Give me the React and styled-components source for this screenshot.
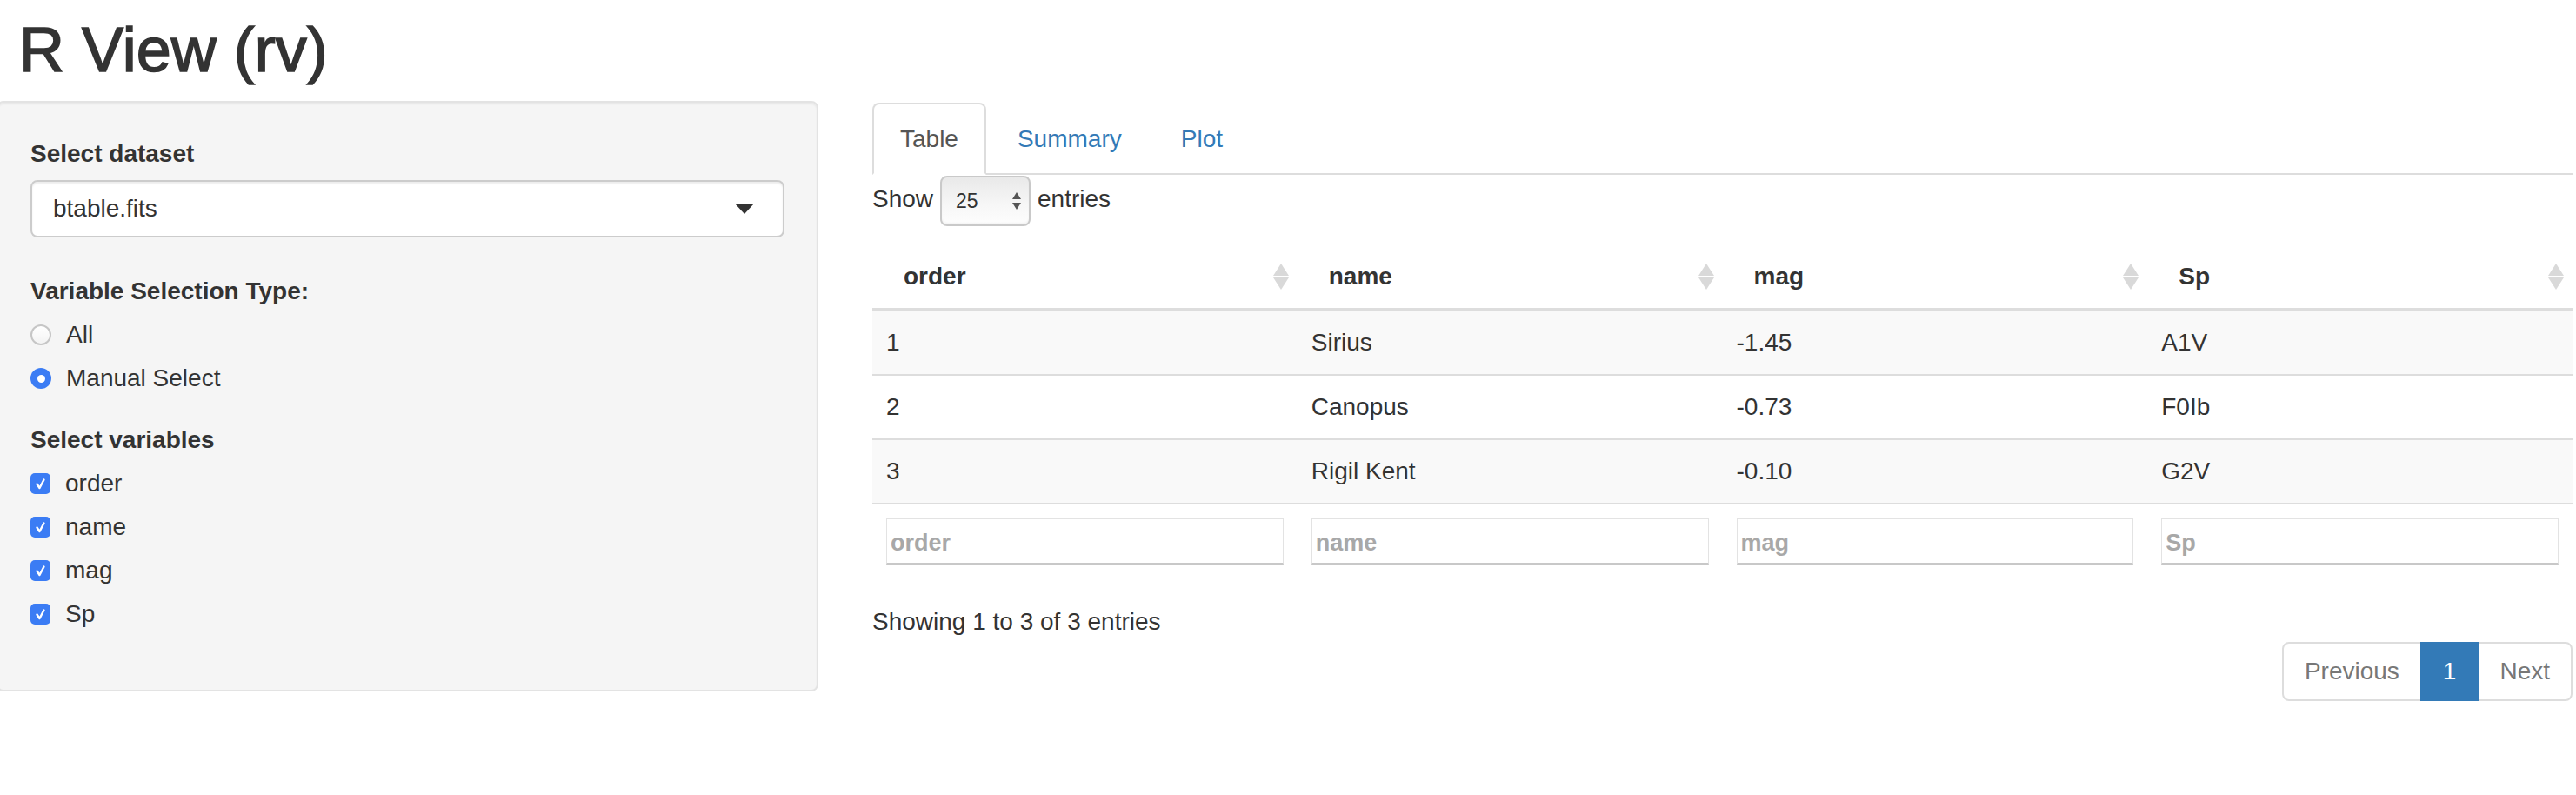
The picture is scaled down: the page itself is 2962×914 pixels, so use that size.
import React from "react";
import styled, { createGlobalStyle } from "styled-components";

const GlobalStyle = createGlobalStyle`
  html, body {
    margin: 0;
    padding: 0;
    background: #fff;
  }
  body {
    font-family: "Liberation Sans", Arial, Helvetica, sans-serif;
    font-size: 28px;
    line-height: 40px;
    color: #333;
  }
  * {
    box-sizing: border-box;
  }
`;

const columns = ["order", "name", "mag", "Sp"];
const rows = [
  ["1", "Sirius", "-1.45", "A1V"],
  ["2", "Canopus", "-0.73", "F0Ib"],
  ["3", "Rigil Kent", "-0.10", "G2V"],
];

const Page = styled.div`
  width: 100%;
`;

const Title = styled.h1`
  margin: 18px 0 19px 22px;
  font-size: 72px;
  line-height: 79px;
  font-weight: 500;
  -webkit-text-stroke: 1.6px #333;
`;

const Layout = styled.div`
  display: grid;
  grid-template-columns: 945px 1fr;
  column-gap: 62px;
  align-items: start;
  margin-left: -4px;
  padding-right: 4px;
`;

const Well = styled.div`
  background: #f5f5f5;
  border: 2px solid #e3e3e3;
  border-radius: 8px;
  box-shadow: inset 0 2px 2px rgba(0, 0, 0, 0.05);
  padding: 39px 37px 37px;
`;

const FormGroup = styled.div`
  margin-bottom: ${(p) => p.$space}px;
`;

const Label = styled.label`
  display: block;
  font-weight: 700;
  margin-bottom: 10px;
`;

const SelectBox = styled.div`
  height: 66px;
  display: flex;
  align-items: center;
  justify-content: space-between;
  padding: 0 33px 0 24px;
  background: #fff;
  border: 2px solid #ccc;
  border-radius: 8px;
  box-shadow: inset 0 2px 2px rgba(0, 0, 0, 0.075);
`;

const Caret = styled.span`
  width: 0;
  height: 0;
  border-left: 11px solid transparent;
  border-right: 11px solid transparent;
  border-top: 12px solid #333;
`;

const OptionList = styled.div`
  display: flex;
  flex-direction: column;
  gap: 10px;
`;

const Option = styled.div`
  display: flex;
  align-items: center;
  height: 40px;
  gap: 17px;
`;

const Radio = styled.span`
  width: 24px;
  height: 24px;
  border-radius: 50%;
  display: flex;
  align-items: center;
  justify-content: center;
  background: ${(p) => (p.$checked ? "#3b7cf4" : "linear-gradient(#fff, #f3f3f3)")};
  border: ${(p) => (p.$checked ? "none" : "2px solid #c6c6c6")};
  &::after {
    content: "";
    width: 9px;
    height: 9px;
    border-radius: 50%;
    background: #fff;
    display: ${(p) => (p.$checked ? "block" : "none")};
  }
`;

const Check = styled.span`
  width: 23px;
  height: 24px;
  border-radius: 5px;
  background: #3b7cf4;
  display: flex;
  align-items: center;
  justify-content: center;
`;

const Main = styled.div`
  min-width: 0;
  margin-top: 2px;
`;

const Tabs = styled.div`
  display: flex;
  border-bottom: 2px solid #ddd;
`;

const Tab = styled.div`
  padding: 20px 30px 19px;
  margin-right: 4px;
  margin-bottom: -2px;
  border: 2px solid transparent;
  border-radius: 8px 8px 0 0;
  color: #337ab7;
  ${(p) =>
    p.$active &&
    `
    color: #555;
    background: #fff;
    border-color: #ddd #ddd transparent;
  `}
`;

const LengthRow = styled.div`
  display: flex;
  align-items: flex-start;
  gap: 8px;
  height: 60px;
  span {
    margin-top: 8px;
  }
`;

const LengthSelect = styled.div`
  width: 104px;
  height: 58px;
  margin-top: 1px;
  display: flex;
  align-items: center;
  justify-content: space-between;
  padding: 0 8px 0 16px;
  font-size: 23px;
  border: 2px solid #c9c9c9;
  border-radius: 8px;
  background: linear-gradient(#e9e9e9, #f7f7f7 60%, #fdfdfd);
  box-shadow: inset 0 -2px 2px rgba(0, 0, 0, 0.04);
`;

const Table = styled.table`
  width: 100%;
  margin-top: 21px;
  border-collapse: collapse;
  table-layout: fixed;
`;

const Th = styled.th`
  position: relative;
  text-align: left;
  font-weight: 700;
  padding: 16px 36px;
  border-bottom: 4px solid #ddd;
`;

const SortIcon = styled.svg`
  position: absolute;
  right: 10px;
  top: 50%;
  transform: translateY(-50%);
`;

const Tr = styled.tr`
  background: ${(p) => (p.$striped ? "#f9f9f9" : "#fff")};
`;

const Td = styled.td`
  padding: 16px;
  border-bottom: 2px solid #ddd;
`;

const FilterCell = styled.td`
  padding: 16px;
`;

const FilterInput = styled.input`
  display: block;
  width: 100%;
  height: 53px;
  padding: 5px 4px 0;
  font-family: inherit;
  font-size: 27px;
  font-weight: 700;
  color: #333;
  background: #fff;
  border: 1px solid #e3e3e3;
  border-bottom: 2px solid #c8c8c8;
  border-radius: 0;
  outline: none;
  &::placeholder {
    color: #a8a8a8;
  }
`;

const Info = styled.div`
  margin-top: 30px;
`;

const Pagination = styled.div`
  display: flex;
  justify-content: flex-end;
  margin-top: 3px;
`;

const PageLink = styled.span`
  padding: 12px 24px;
  border: 2px solid ${(p) => (p.$active ? "#337ab7" : "#ddd")};
  margin-left: ${(p) => (p.$first ? 0 : -2)}px;
  background: ${(p) => (p.$active ? "#337ab7" : "#fff")};
  color: ${(p) => (p.$active ? "#fff" : "#777")};
  border-radius: ${(p) =>
    p.$first ? "8px 0 0 8px" : p.$last ? "0 8px 8px 0" : "0"};
  position: relative;
  z-index: ${(p) => (p.$active ? 2 : 1)};
`;

const SortArrows = () => (
  <SortIcon width="18" height="32" viewBox="0 0 18 32">
    <polygon points="9,1 18,15 0,15" fill="#d9d9d9" />
    <polygon points="0,17 18,17 9,31" fill="#d9d9d9" />
  </SortIcon>
);

const CheckMark = () => (
  <svg width="15" height="15" viewBox="0 0 15 15">
    <path
      d="M3.5 7.5 L6.5 12 L11.5 2.5"
      fill="none"
      stroke="#fff"
      strokeWidth="2.4"
      strokeLinecap="round"
      strokeLinejoin="round"
    />
  </svg>
);

const Spinner = () => (
  <svg width="12" height="22" viewBox="0 0 12 22">
    <polygon points="6,1 11,9 1,9" fill="#555" />
    <polygon points="1,13 11,13 6,21" fill="#555" />
  </svg>
);

const App = () => {
  return (
    <Page>
      <GlobalStyle />
      <Title>R View (rv)</Title>
      <Layout>
        <Well>
          <FormGroup $space={42}>
            <Label>Select dataset</Label>
            <SelectBox>
              <span>btable.fits</span>
              <Caret />
            </SelectBox>
          </FormGroup>
          <FormGroup $space={31}>
            <Label>Variable Selection Type:</Label>
            <OptionList>
              <Option>
                <Radio />
                All
              </Option>
              <Option>
                <Radio $checked />
                Manual Select
              </Option>
            </OptionList>
          </FormGroup>
          <FormGroup $space={30}>
            <Label>Select variables</Label>
            <OptionList>
              {columns.map((col) => (
                <Option key={col}>
                  <Check>
                    <CheckMark />
                  </Check>
                  {col}
                </Option>
              ))}
            </OptionList>
          </FormGroup>
        </Well>

        <Main>
          <Tabs>
            <Tab $active>Table</Tab>
            <Tab>Summary</Tab>
            <Tab>Plot</Tab>
          </Tabs>
          <LengthRow>
            <span>Show</span>
            <LengthSelect>
              25
              <Spinner />
            </LengthSelect>
            <span>entries</span>
          </LengthRow>
          <Table>
            <thead>
              <tr>
                {columns.map((col) => (
                  <Th key={col}>
                    {col}
                    <SortArrows />
                  </Th>
                ))}
              </tr>
            </thead>
            <tbody>
              {rows.map((row, idx) => (
                <Tr key={idx} $striped={idx % 2 === 0}>
                  {row.map((cell, i) => (
                    <Td key={i}>{cell}</Td>
                  ))}
                </Tr>
              ))}
            </tbody>
            <tfoot>
              <tr>
                {columns.map((col) => (
                  <FilterCell key={col}>
                    <FilterInput placeholder={col} />
                  </FilterCell>
                ))}
              </tr>
            </tfoot>
          </Table>
          <Info>Showing 1 to 3 of 3 entries</Info>
          <Pagination>
            <PageLink $first>Previous</PageLink>
            <PageLink $active>1</PageLink>
            <PageLink $last>Next</PageLink>
          </Pagination>
        </Main>
      </Layout>
    </Page>
  );
};

export default App;
